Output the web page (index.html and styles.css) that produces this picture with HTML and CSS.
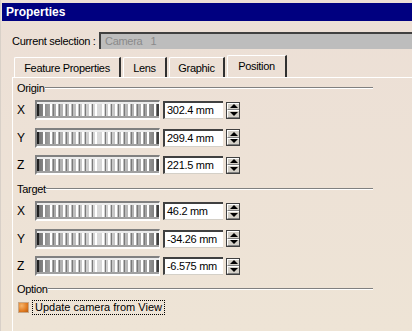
FILE: index.html
```html
<!DOCTYPE html>
<html>
  <head>
    <title>Properties</title>
    <link rel="stylesheet" href="styles.css">
  </head>
  <body>
    <div class="window">
      <div class="titlebar">Properties</div>

      <div class="selection">
        <span class="selection-label">Current selection :</span>
        <div class="selection-box">Camera&nbsp;&nbsp;&nbsp;1</div>
      </div>

      <div class="tabs">
        <div class="tab tab-feature">Feature Properties</div>
        <div class="tab tab-lens">Lens</div>
        <div class="tab tab-graphic">Graphic</div>
        <div class="tab tab-position active">Position</div>
      </div>

      <div class="panel">
        <div class="group-title"><span>Origin</span></div>
        <div class="rows">
          <div class="row">
            <span class="axis">X</span>
            <div class="wheel"></div>
            <div class="value">302.4 mm</div>
            <div class="spin"><span class="up"></span><span class="down"></span></div>
          </div>
          <div class="row">
            <span class="axis">Y</span>
            <div class="wheel"></div>
            <div class="value">299.4 mm</div>
            <div class="spin"><span class="up"></span><span class="down"></span></div>
          </div>
          <div class="row">
            <span class="axis">Z</span>
            <div class="wheel"></div>
            <div class="value">221.5 mm</div>
            <div class="spin"><span class="up"></span><span class="down"></span></div>
          </div>
        </div>

        <div class="group-title target"><span>Target</span></div>
        <div class="rows">
          <div class="row">
            <span class="axis">X</span>
            <div class="wheel"></div>
            <div class="value">46.2 mm</div>
            <div class="spin"><span class="up"></span><span class="down"></span></div>
          </div>
          <div class="row">
            <span class="axis">Y</span>
            <div class="wheel"></div>
            <div class="value">-34.26 mm</div>
            <div class="spin"><span class="up"></span><span class="down"></span></div>
          </div>
          <div class="row">
            <span class="axis">Z</span>
            <div class="wheel"></div>
            <div class="value">-6.575 mm</div>
            <div class="spin"><span class="up"></span><span class="down"></span></div>
          </div>
        </div>

        <div class="group-title option"><span>Option</span></div>
        <div class="check-row">
          <span class="check"></span>
          <span class="check-label">Update camera from View</span>
        </div>
      </div>
    </div>
  </body>
</html>
```

FILE: styles.css
```css
body {
  margin: 0;
  font-family: "Liberation Sans", Arial, sans-serif;
  font-size: 11px;
  letter-spacing: -0.3px;
  color: #000;
}

.window {
  width: 412px;
  height: 331px;
  overflow: hidden;
  white-space: nowrap;
  background: linear-gradient(#ecdfd6, #eee4d6);
  border-left: 1px solid #d8d0c8;
  box-sizing: border-box;
}

.titlebar {
  margin: 3px 0 0 1px;
  height: 18px;
  line-height: 18px;
  padding-left: 4px;
  background: #000080;
  color: #fff;
  font-weight: bold;
  font-size: 12px;
  letter-spacing: 0;
}

.selection {
  display: flex;
  align-items: center;
  margin-top: 11px;
  padding-left: 11px;
}

.selection-label {
  width: 87px;
}

.selection-box {
  flex: 1;
  height: 15px;
  line-height: 15px;
  padding-left: 4px;
  background: #bdbdbd;
  color: #8a8a8a;
  border-top: 2px solid #404040;
  border-left: 2px solid #404040;
}

.tabs {
  display: flex;
  align-items: flex-end;
  margin-top: 6px;
  padding-left: 13px;
  height: 22px;
}

.tab {
  height: 20px;
  line-height: 20px;
  text-align: center;
  margin-right: 2px;
  border-top: 1px solid #fff;
  border-left: 1px solid #fff;
  border-right: 2px solid #303030;
  border-top-left-radius: 2px;
  box-sizing: border-box;
}

.tab-feature {
  width: 107px;
}

.tab-lens {
  width: 44px;
}

.tab-graphic {
  width: 56px;
}

.tab-position {
  width: 60px;
}

.tab.active {
  height: 22px;
  line-height: 21px;
}

.panel {
  margin-left: 11px;
  border-top: 1px solid #fff;
  border-left: 1px solid #fff;
  padding: 3px 0 0 4px;
  height: 260px;
}

.group-title {
  display: flex;
  align-items: center;
  width: 356px;
  height: 14px;
}

.group-title::after {
  content: "";
  flex: 1;
  height: 1px;
  background: #808080;
  border-bottom: 1px solid #fff;
}

.group-title.target {
  margin-top: 7px;
}

.group-title.option {
  margin-top: 6px;
}

.rows {
  display: flex;
  flex-direction: column;
  gap: 7.5px;
  margin-top: 5px;
}

.row {
  display: flex;
  align-items: center;
  height: 20px;
}

.axis {
  width: 18px;
  font-size: 12px;
}

/* thumbwheel: dark ends, striped grey drum */
.wheel {
  width: 122px;
  height: 16px;
  border-top: 2px solid #808080;
  border-left: 2px solid #808080;
  border-bottom: 2px solid #fff;
  border-right: 1px solid #fff;
  background:
    linear-gradient(90deg, #202020 0 2px, transparent 2px calc(100% - 2px), #404040 calc(100% - 2px)),
    repeating-linear-gradient(90deg, #fff 0 2px, transparent 2px 3px, #7a7a7a 3px 4px, transparent 4px 6.5px),
    linear-gradient(90deg, #6c6c6c, #a8a8a8 12%, #c4c4c4 35%, #dadada 50%, #c4c4c4 65%, #a8a8a8 88%, #6c6c6c);
  box-shadow: inset 0 2px 0 #ececec, inset 0 -2px 0 #a0a0a0;
}

.value {
  width: 56px;
  height: 15px;
  line-height: 15px;
  margin-left: 3px;
  padding-left: 2px;
  overflow: hidden;
  background: #fff;
  border-top: 2px solid #404040;
  border-left: 2px solid #404040;
  border-bottom: 1px solid #d4d0c8;
}

.spin {
  display: flex;
  flex-direction: column;
  width: 14px;
  height: 17px;
  margin-left: 3px;
  border: 1px solid #404040;
  box-sizing: border-box;
  background: #d4d0c8;
}

.spin span {
  flex: 1;
  display: flex;
  align-items: center;
  justify-content: center;
  border-top: 1px solid #fff;
  border-left: 1px solid #fff;
  border-bottom: 1px solid #808080;
}

.spin .up::before,
.spin .down::before {
  content: "";
  border-left: 4px solid transparent;
  border-right: 4px solid transparent;
}

.spin .up::before {
  border-bottom: 4px solid #000;
}

.spin .down::before {
  border-top: 4px solid #000;
}

.check-row {
  display: flex;
  align-items: center;
  margin-top: 5px;
  padding-left: 1px;
}

.check {
  width: 9px;
  height: 9px;
  background: radial-gradient(circle at 30% 30%, #f6b46a, #e07a20 60%, #b65a10);
  border: 1px solid #c8a888;
}

.check-label {
  margin-left: 4px;
  padding: 0 2px;
  line-height: 13px;
  letter-spacing: 0;
  outline: 1px dotted #000;
}
```
